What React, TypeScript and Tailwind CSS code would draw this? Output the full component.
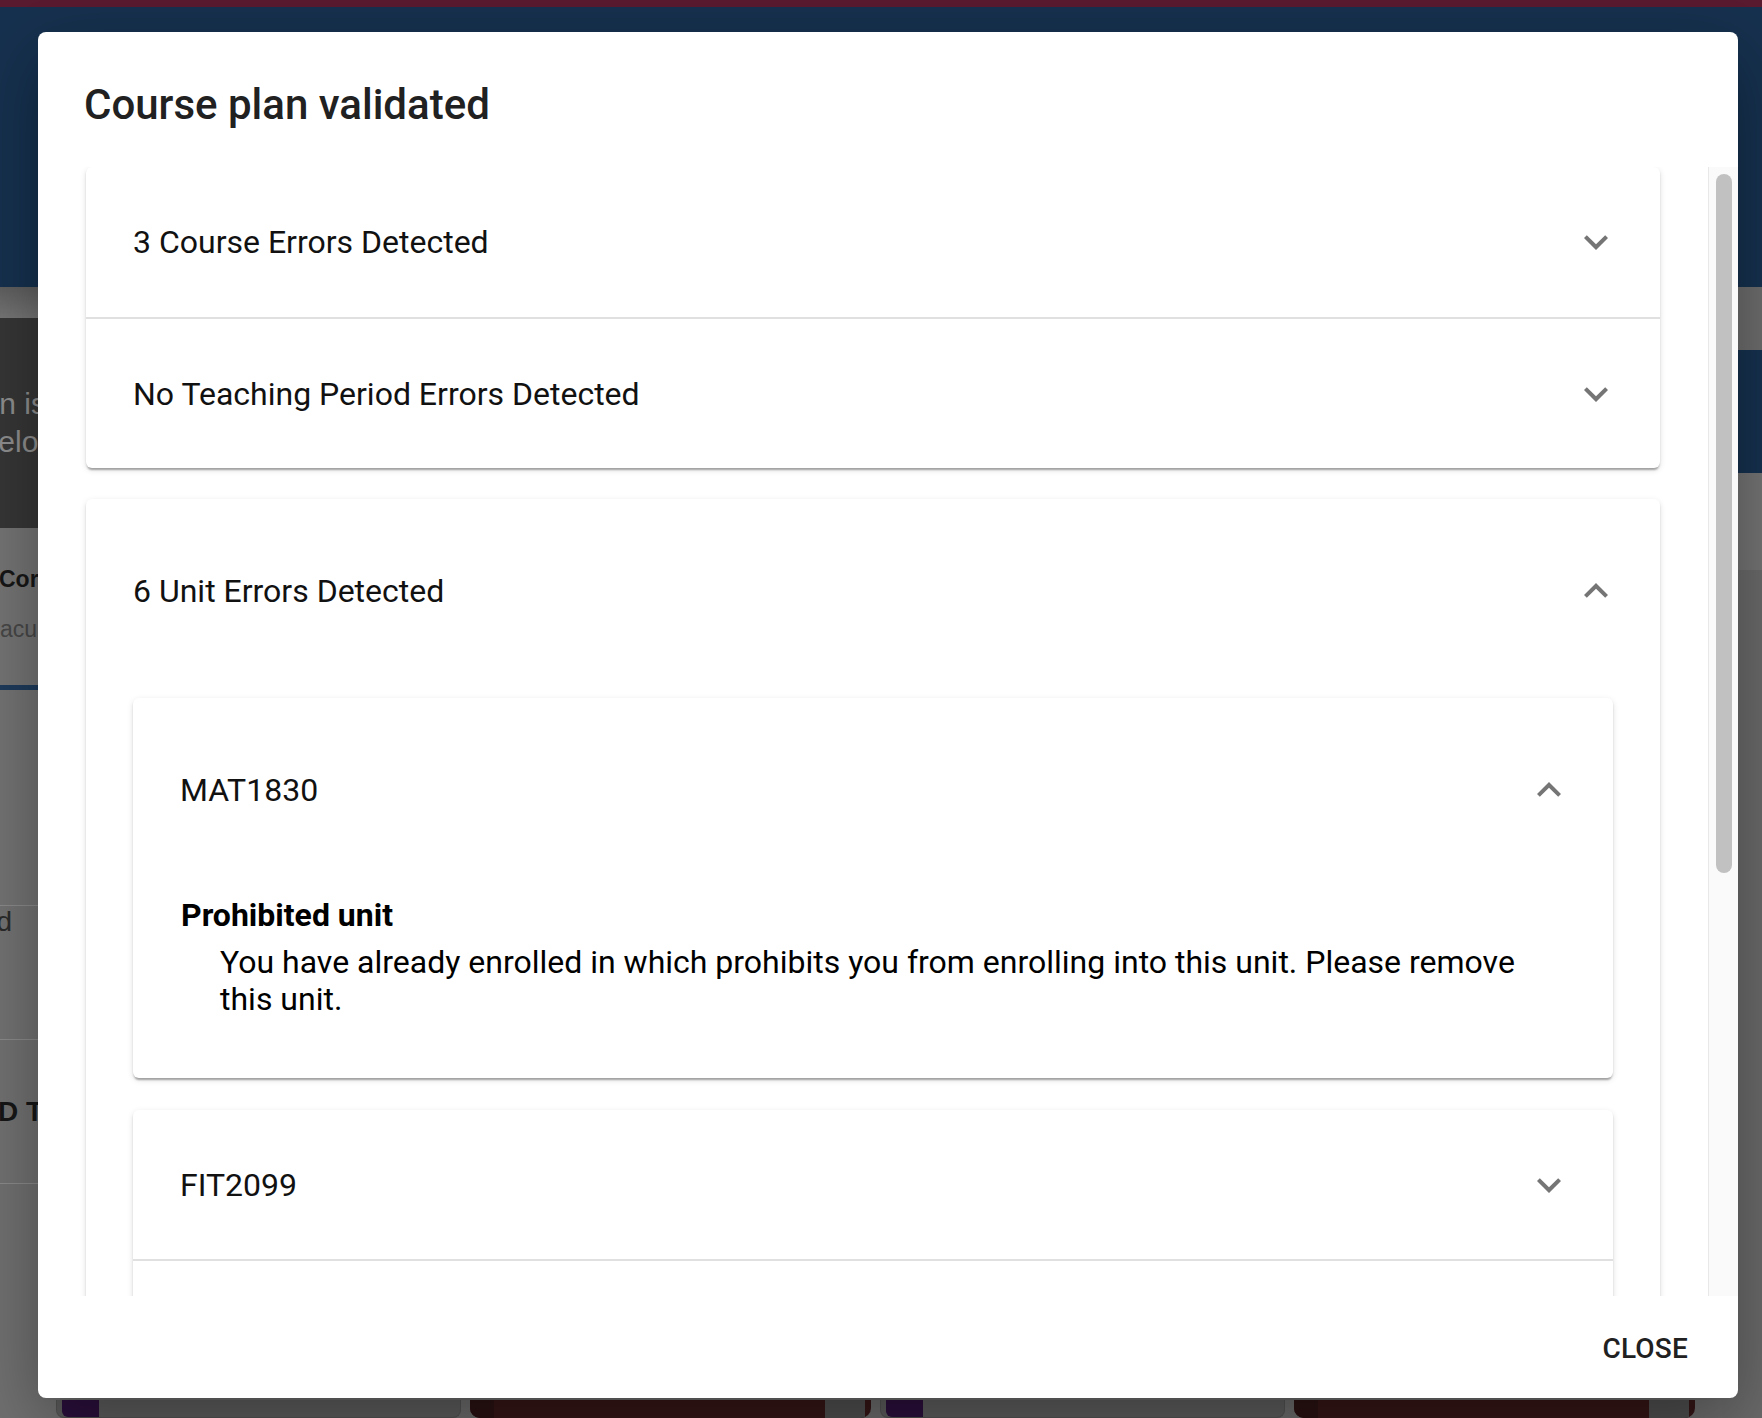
import React from 'react';

const cardShadow =
  'shadow-[0_4px_2px_-2px_rgba(0,0,0,0.2),0_2px_2px_0_rgba(0,0,0,0.14),0_2px_6px_0_rgba(0,0,0,0.12)]';

function Chevron({ up = false }: { up?: boolean }) {
  return (
    <svg viewBox="0 0 24 24" className={`w-[48px] h-[48px] shrink-0 ${up ? 'rotate-180' : ''}`}>
      <path d="M16.59 8.59 12 13.17 7.41 8.59 6 10l6 6 6-6z" fill="#757575" />
    </svg>
  );
}

function SummaryRow({
  label,
  up = false,
  height = 'h-[150px]',
  divider = false,
}: {
  label?: string;
  up?: boolean;
  height?: string;
  divider?: boolean;
}) {
  return (
    <div
      className={`${height} flex items-center justify-between pl-[47px] pr-[40px] ${
        divider ? 'border-t-2 border-[#e0e0e0]' : ''
      }`}
    >
      <span className="text-[32px] leading-[40px] text-[#111]">{label}</span>
      {label && <Chevron up={up} />}
    </div>
  );
}

function Background() {
  return (
    <div className="flex flex-col w-[1762px] h-[1418px] bg-[#6b6b6b] font-['Liberation_Sans',Arial,sans-serif]">
      <div className="h-[7px] bg-[#5a1a2f]" />
      <div className="h-[280px] bg-[#16314f]" />
      <div className="flex flex-1 min-h-0">
        {/* left page column, mostly under the dialog */}
        <div className="w-[60px] flex flex-col">
          <div className="h-[31px] bg-gradient-to-b from-[#5f5f5f] to-[#767676]" />
          <div className="h-[210px] bg-[#363636] pt-[67px] text-[30px] leading-[38px] text-[#8e8e8e]">
            <div className="flex justify-end w-[46px] whitespace-nowrap">plan is</div>
            <div className="flex justify-end w-[60px] whitespace-nowrap">below</div>
          </div>
          <div className="h-[157px] bg-[#747474] pt-[26px] text-[23px] leading-[50px] whitespace-nowrap">
            <div className="-ml-[1px] font-bold text-[#161616]">Core units</div>
            <div className="-ml-[14px] text-[#474747]">Faculty</div>
          </div>
          <div className="h-[5px] bg-[#1e3b5b]" />
          <div className="h-[215px] bg-[#737373]" />
          <div className="h-[134px] border-t border-[#8a8a8a] bg-[#727272] text-[28px] leading-[32px] text-[#2b2b2b] whitespace-nowrap">
            <div className="flex justify-end w-[12px]">Completed</div>
          </div>
          <div className="h-[144px] border-t border-[#8a8a8a] bg-[#717171] pt-[56px] text-[28px] leading-[32px] font-bold text-[#161616] whitespace-nowrap">
            <div className="-ml-[2px]">D TEACHING</div>
          </div>
          <div className="flex-1 border-t border-[#8a8a8a] bg-[#707070]" />
        </div>
        <div className="flex-1 flex flex-col justify-end">
          <div className="h-[18px] flex gap-[9px] -ml-[4px]">
            {[0, 1].map((i) => (
              <React.Fragment key={i}>
                <div className="w-[405px] flex rounded-b-[8px] border border-t-0 border-[#525252] bg-[#5c5c5c]">
                  <div className="ml-[5px] w-[37px] rounded-bl-[6px] bg-[#2b0f3c]" />
                </div>
                <div className="w-[401px] flex rounded-b-[10px] bg-[#351516] overflow-hidden">
                  <div className="w-[24px] bg-[#2a1112]" />
                  <div className="flex-1" />
                  <div className="w-[40px] mr-[6px] bg-[#4e4e4e]" />
                </div>
              </React.Fragment>
            ))}
          </div>
        </div>
        {/* right page column */}
        <div className="w-[40px] flex flex-col">
          <div className="h-[63px] bg-[#6d6d6d]" />
          <div className="h-[123px] bg-[#16314f]" />
          <div className="h-[97px] bg-[#747474]" />
          <div className="flex-1 bg-[#6a6a6a]" />
        </div>
      </div>
    </div>
  );
}

export default function App() {
  return (
    <div className="relative w-[1762px] h-[1418px] overflow-hidden">
      <Background />

      {/* dialog */}
      <div className="absolute left-[38px] top-[32px] w-[1700px] h-[1366px] flex flex-col bg-white rounded-[8px] shadow-[0_22px_70px_rgba(0,0,0,0.35)] font-[Roboto,sans-serif]">
        <h2 className="pl-[46px] pt-[41px] pb-[30px] text-[42px] leading-[64px] font-medium text-[#212121]">
          Course plan validated
        </h2>

        <div className="flex flex-1 min-h-0">
          <div className="flex-1 overflow-hidden px-[48px]">
            <div className={`rounded-[6px] bg-white ${cardShadow}`}>
              <SummaryRow label="3 Course Errors Detected" />
              <SummaryRow label="No Teaching Period Errors Detected" divider height="h-[151px]" />
            </div>

            <div className={`mt-[31px] rounded-[6px] bg-white ${cardShadow}`}>
              <SummaryRow label="6 Unit Errors Detected" up height="h-[184px]" />
              <div className="pt-[15px] px-[47px] pb-[32px]">
                <div className={`rounded-[6px] bg-white ${cardShadow}`}>
                  <SummaryRow label="MAT1830" up height="h-[184px]" />
                  <dl className="pl-[48px] pr-[72px] pt-[16px] pb-[60px] text-black">
                    <dt className="text-[32px] font-bold leading-[34px]">Prohibited unit</dt>
                    <dd className="ml-[39px] mt-[12px] text-[32px] leading-[37px]">
                      You have already enrolled in which prohibits you from enrolling into this unit. Please remove
                      this unit.
                    </dd>
                  </dl>
                </div>

                <div className={`mt-[32px] rounded-[6px] bg-white ${cardShadow}`}>
                  <SummaryRow label="FIT2099" height="h-[149px]" />
                  <SummaryRow divider height="h-[151px]" />
                </div>
              </div>
            </div>
          </div>

          {/* scrollbar */}
          <div className="w-[30px] border-l border-[#e8e8e8] bg-[#fafafa] pt-[7px]">
            <div className="ml-[7px] w-[16px] h-[699px] rounded-full bg-[#c1c1c1]" />
          </div>
        </div>

        <div className="h-[102px] flex items-center justify-end pr-[50px] pt-[4px]">
          <button className="text-[28px] leading-[36px] font-medium uppercase tracking-[0.2px] text-[#212121]">
            Close
          </button>
        </div>
      </div>
    </div>
  );
}
